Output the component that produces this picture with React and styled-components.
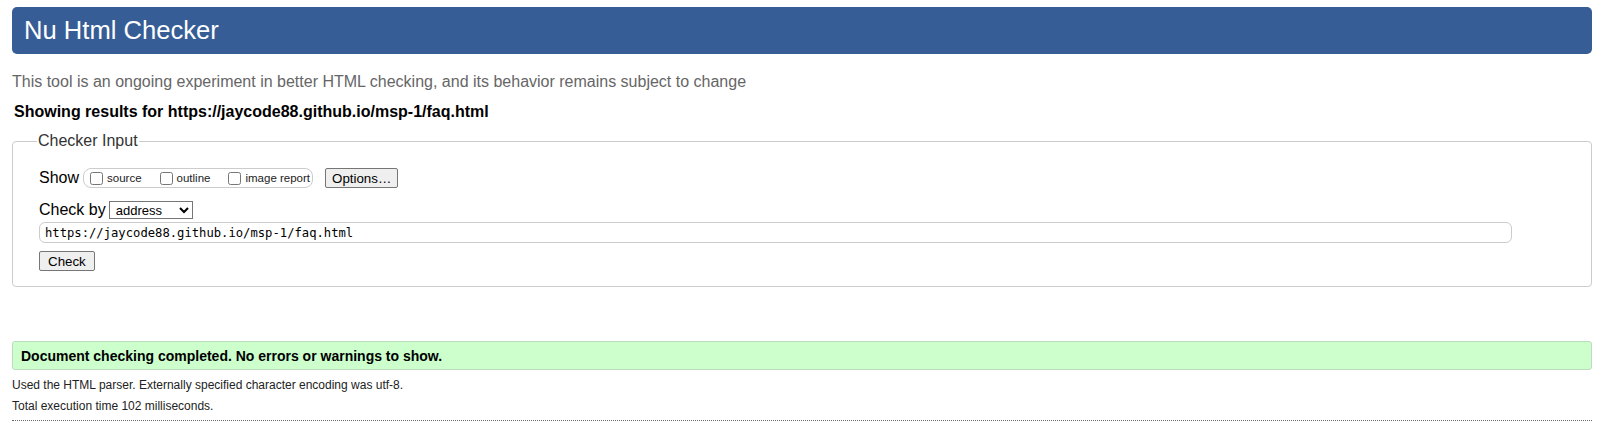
import styled, { createGlobalStyle } from "styled-components";

const GlobalStyle = createGlobalStyle`
  body {
    margin: 0;
    padding: 7px 8px 0 12px;
    font-family: "Liberation Sans", Arial, sans-serif;
    color: #000;
    background: #fff;
  }
`;

const Header = styled.h1`
  margin: 0;
  height: 47px;
  padding: 0 12px;
  display: flex;
  align-items: center;
  background: #365d95;
  color: #fff;
  border-radius: 5px;
  font-size: 25.6px;
  font-weight: 400;
`;

const Intro = styled.p`
  margin: 19px 0 0;
  color: #666;
  font-size: 16px;
  line-height: 18px;
`;

const ResultsFor = styled.p`
  margin: 12px 0 0 2px;
  font-size: 16px;
  font-weight: 700;
  line-height: 18px;
`;

const InputBox = styled.fieldset`
  margin: 11px 0 0;
  padding: 6px 26px 15px;
  border: 1px solid #ccc;
  border-radius: 4px;
  min-width: 0;
`;

const Legend = styled.legend`
  padding: 0 1px;
  margin-left: -2px;
  font-size: 16px;
  color: #333;
`;

const Row = styled.div`
  display: flex;
  align-items: center;
  gap: ${(p) => p.gap || 4}px;
  margin-top: ${(p) => p.top || 0}px;
  font-size: 16px;
`;

const ShowGroup = styled.span`
  display: inline-flex;
  align-items: center;
  box-sizing: border-box;
  height: 20px;
  border: 1px solid #ccc;
  border-radius: 8px;
  padding: 0 2px 0 2px;
  gap: 14px;
  margin-right: 8px;
`;

const CheckLabel = styled.label`
  display: inline-flex;
  align-items: center;
  font-size: 11.5px;
  color: #222;

  input {
    margin: 0 4px 0 4px;
    width: 13px;
    height: 13px;
  }
`;

const Button = styled.button`
  height: 20px;
  padding: 0 ${(p) => p.pad || 8}px;
  font-family: "Liberation Sans", Arial, sans-serif;
  font-size: 13.33px;
  background: #efefef;
  border: 1px solid #767676;
  border-radius: 2px;
  color: #000;
`;

const Select = styled.select`
  width: 84px;
  height: 18px;
  font-family: "Liberation Sans", Arial, sans-serif;
  font-size: 13px;
  border: 1px solid #767676;
  border-radius: 0;
  background: #fff;
  padding: 0 2px;
`;

const UrlInput = styled.input`
  display: block;
  box-sizing: border-box;
  width: 1473px;
  height: 21px;
  margin-top: 3px;
  padding: 0 5px;
  border: 1px solid #ccc;
  border-radius: 6px;
  font-family: "DejaVu Sans Mono", monospace;
  font-size: 12.2px;
  color: #000;
`;

const Success = styled.p`
  margin: 54px 0 0;
  height: 29px;
  box-sizing: border-box;
  display: flex;
  align-items: center;
  padding: 0 8px;
  background: #ccffcc;
  border: 1px solid #bbddbb;
  border-radius: 3px;
  font-size: 14px;
  font-weight: 700;
`;

const Note = styled.p`
  margin: ${(p) => p.top || 0}px 0 0;
  font-size: 12px;
  line-height: 14px;
  color: #222;
`;

const Rule = styled.hr`
  margin: 7px 0 0;
  border: 0;
  border-top: 1px dotted #666;
`;

export default function App() {
  return (
    <>
      <GlobalStyle />
      <Header>Nu Html Checker</Header>
      <Intro>
        This tool is an ongoing experiment in better HTML checking, and its
        behavior remains subject to change
      </Intro>
      <ResultsFor>
        Showing results for https://jaycode88.github.io/msp-1/faq.html
      </ResultsFor>
      <InputBox>
        <Legend>Checker Input</Legend>
        <Row top={12}>
          Show
          <ShowGroup>
            <CheckLabel>
              <input type="checkbox" />
              source
            </CheckLabel>
            <CheckLabel>
              <input type="checkbox" />
              outline
            </CheckLabel>
            <CheckLabel>
              <input type="checkbox" />
              image report
            </CheckLabel>
          </ShowGroup>
          <Button type="button" pad={6}>
            Options…
          </Button>
        </Row>
        <Row top={13} gap={3}>
          Check by
          <Select defaultValue="address">
            <option value="address">address</option>
            <option value="file">file upload</option>
            <option value="text">text input</option>
          </Select>
        </Row>
        <UrlInput
          type="url"
          defaultValue="https://jaycode88.github.io/msp-1/faq.html"
        />
        <Row top={8}>
          <Button type="submit">Check</Button>
        </Row>
      </InputBox>
      <Success>
        Document checking completed. No errors or warnings to show.
      </Success>
      <Note top={8}>
        Used the HTML parser. Externally specified character encoding was
        utf-8.
      </Note>
      <Note top={7}>Total execution time 102 milliseconds.</Note>
      <Rule />
    </>
  );
}
